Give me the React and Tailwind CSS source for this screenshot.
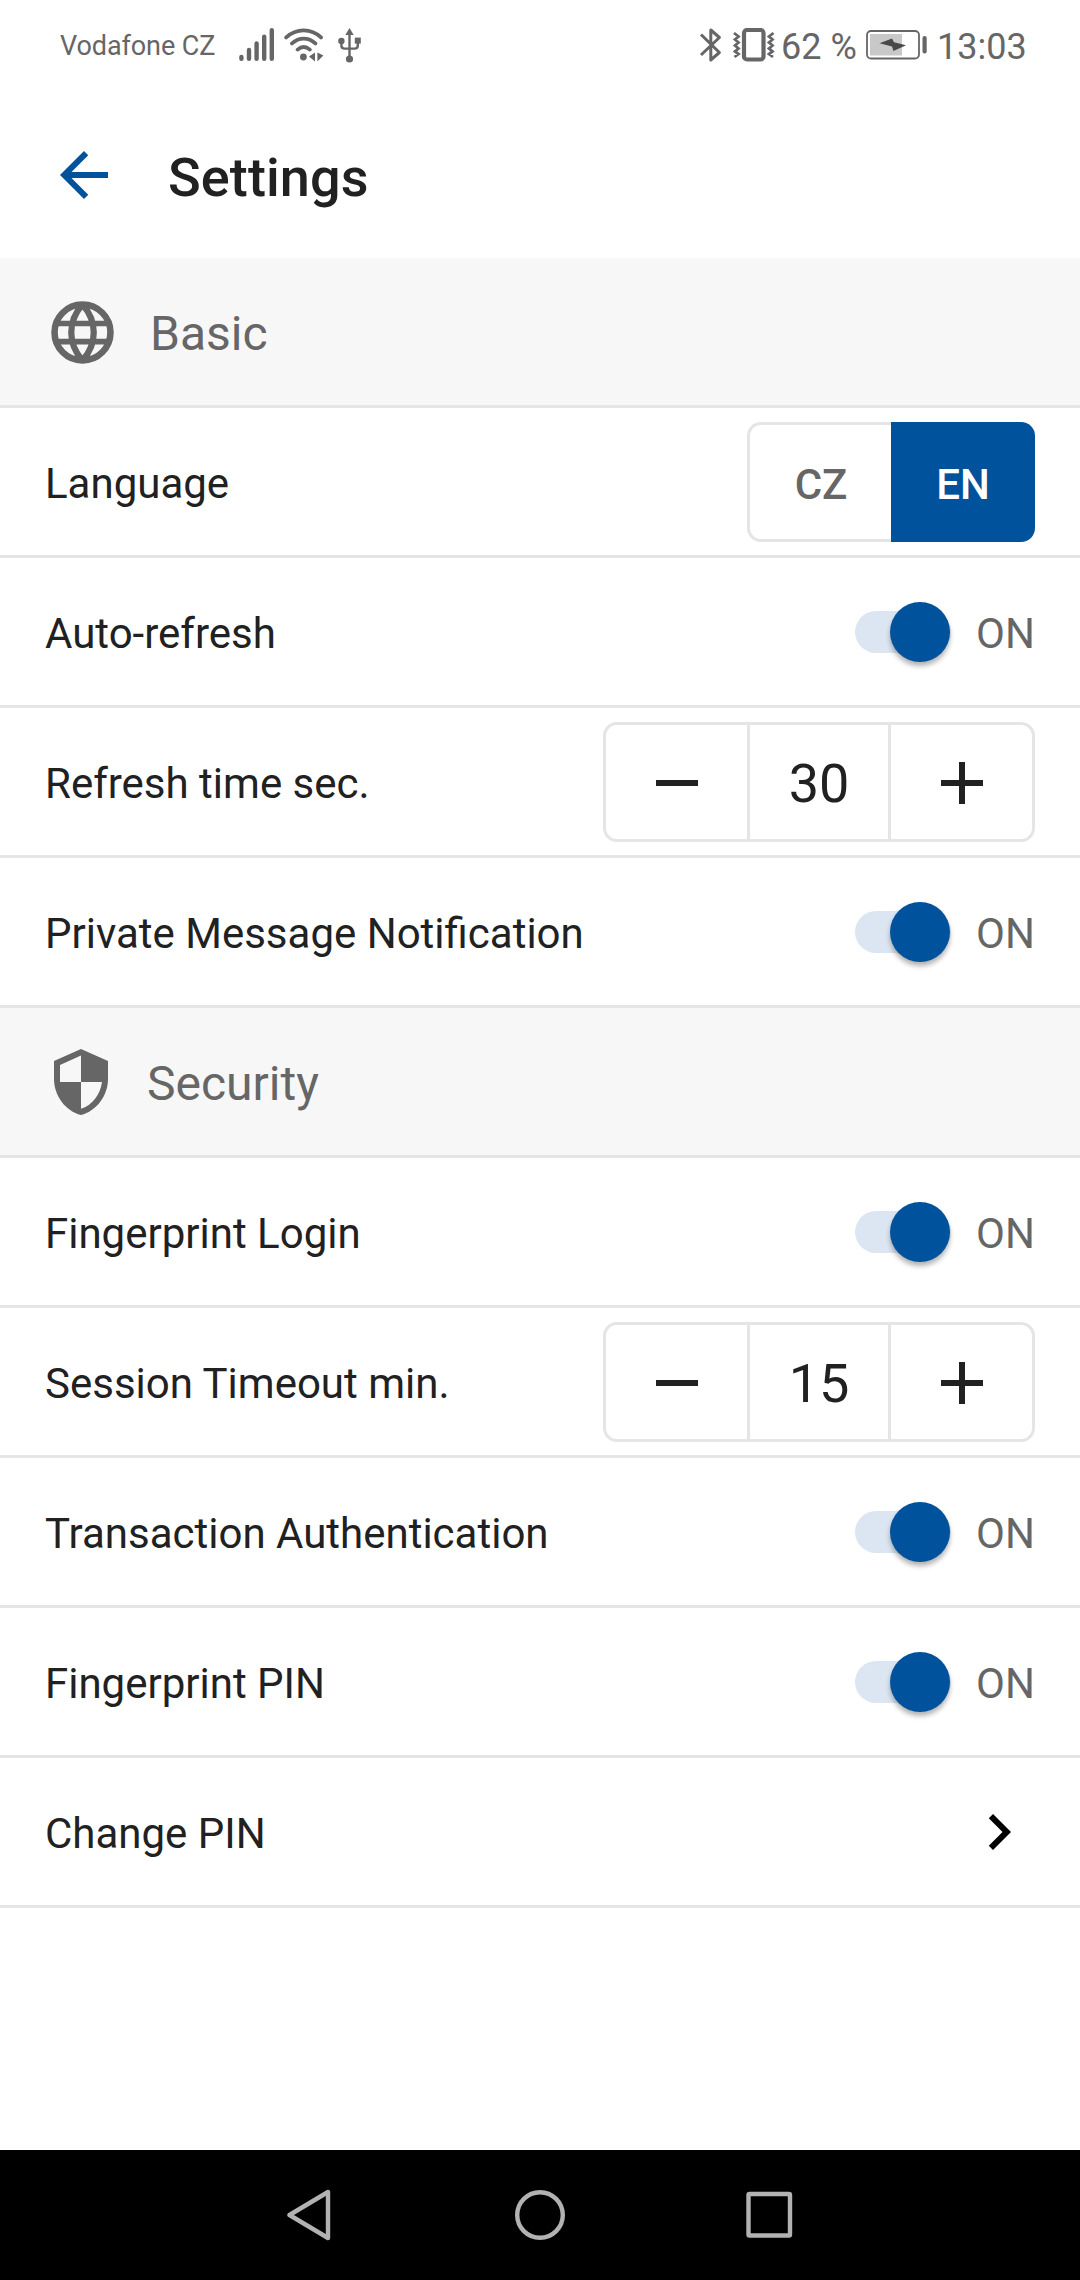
import React, { useState } from "react";

function SignalIcon() {
  return (
    <svg width="36" height="34" viewBox="0 0 36 34" stroke="#666" strokeWidth="4.4" strokeLinecap="round">
      <path d="M2.400 29v1.800M10 22v8.800M17.600 15.400v15.400M25.200 8.600v22.200M32.800 2.200v28.600" />
    </svg>
  );
}

function WifiIcon() {
  return (
    <svg width="40" height="34" viewBox="0 0 40 34" fill="none" stroke="#666" strokeWidth="3.8" strokeLinecap="round">
      <path d="M2.200 9.400C12.200 0 27.200 0 37 9.400M8 15.400c7-6.400 16.400-6.400 23.400 0M13.600 21.600c3.800-3.200 8.400-3.200 12.200 0" />
      <circle cx="19.4" cy="29" r="3.400" fill="#666" stroke="none" />
      <path d="M31 24.500v9l-6-5zM33.400 24.500v9l6-6z" fill="#666" stroke="none" />
    </svg>
  );
}

function UsbIcon() {
  return (
    <svg width="24" height="36" viewBox="0 0 24 36" fill="none" stroke="#666" strokeWidth="2.4">
      <path d="M11.500 6v26M3.400 13v5.400q0 3.200 3.200 3.200h10q3.200 0 3.200-3.200V13" />
      <path d="M11.500 1l4.200 7H7.300z" fill="#666" stroke="none" />
      <circle cx="3.400" cy="14" r="3.200" fill="#666" stroke="none" />
      <path d="M16.800 10.600h6v6h-6z" fill="#666" stroke="none" />
      <circle cx="11.500" cy="32" r="3.600" fill="#666" stroke="none" />
    </svg>
  );
}

function BluetoothIcon() {
  return (
    <svg width="24" height="36" viewBox="0 0 24 36" fill="none" stroke="#666" strokeWidth="3" strokeLinejoin="round">
      <path d="M2 7.500l18.400 18-8.600 7.500V3l8.600 7.500L2 28" />
    </svg>
  );
}

function VibrateIcon() {
  return (
    <svg width="44" height="34" viewBox="0 0 44 34" fill="none" stroke="#666">
      <rect x="12" y="2" width="19.500" height="29.500" rx="3" strokeWidth="4.200" />
      <path d="M2 5l4.500 3.500-3.500 3 3.500 3-3.500 3 3.500 3-3.500 3 3.500 2.500-4 3M41.500 5L37 8.500l3.500 3-3.500 3 3.500 3-3.500 3 3.500 3-3.500 2.500 4 3" strokeWidth="2.800" />
    </svg>
  );
}

function BatteryIcon() {
  return (
    <svg width="62" height="30" viewBox="0 0 62 30">
      <rect x="1" y="1" width="52" height="27.500" rx="4" fill="none" stroke="#666" strokeWidth="1.800" />
      <rect x="4" y="4" width="32" height="21.500" fill="#c8c8c8" />
      <path d="M13.500 13.200L26 8.500l2 3.800 12 3-12.500 5.700-1.500-4.500z" fill="#484848" />
      <rect x="56.500" y="6" width="4.200" height="17.500" rx="2" fill="#666" />
    </svg>
  );
}

function StatusBar() {
  return (
    <div className="flex h-[90px] items-center text-[#666]">
      <div className="ml-[60px] w-[179px] pt-[2px] whitespace-nowrap text-[27px] tracking-[-0.1px]">Vodafone CZ</div>
      <SignalIcon />
      <div className="ml-[9px]"><WifiIcon /></div>
      <div className="ml-[14px]"><UsbIcon /></div>
      <div className="ml-auto flex items-center">
        <BluetoothIcon />
        <div className="ml-[9px] w-[49px]"><VibrateIcon /></div>
        <div className="w-[85px] pt-[4px] whitespace-nowrap text-[36px]">62 %</div>
        <BatteryIcon />
        <div className="ml-[9px] w-[143px] pt-[4px] whitespace-nowrap text-[36px]">13:03</div>
      </div>
    </div>
  );
}

function Header() {
  return (
    <header className="flex h-[168px] items-center">
      <button className="ml-[48px] pt-[2px]" aria-label="Back">
        <svg width="72" height="72" viewBox="0 0 24 24" fill="#00529c">
          <path d="M20 11H7.830l5.590-5.590L12 4l-8 8 8 8 1.410-1.410L7.830 13H20v-2z" />
        </svg>
      </button>
      <h1 className="ml-[48px] pt-[7px] text-[54px] font-medium tracking-[0.1px] text-[#212121]">Settings</h1>
    </header>
  );
}

function GlobeIcon() {
  return (
    <svg className="mt-[2px]" width="75" height="75" viewBox="0 0 24 24" fill="none" stroke="#666">
      <circle cx="12" cy="12" r="8.950" strokeWidth="2.100" />
      <path d="M3.500 9.100h17M3.500 14.900h17" strokeWidth="1.800" />
      <path d="M12 3C7.200 8.500 7.200 15.500 12 21M12 3c4.800 5.500 4.800 12.500 0 18" strokeWidth="2" />
    </svg>
  );
}

function ShieldIcon() {
  return (
    <svg width="72" height="72" viewBox="0 0 24 24" fill="#666">
      <path d="M12 1L3 5v6c0 5.550 3.840 10.740 9 12 5.160-1.260 9-6.450 9-12V5l-9-4zm0 10.990h7c-.53 4.120-3.280 7.790-7 8.940V12H5V6.300l7-3.110v8.800z" />
    </svg>
  );
}

function Section({ icon, title }) {
  return (
    <div className="flex h-[150px] items-center gap-[30px] border-b-[3px] border-[#e5e5e5] bg-[#f7f7f7] pl-[45px]">
      {icon}
      <h2 className="pt-[4px] text-[48px] text-[#666]">{title}</h2>
    </div>
  );
}

function Row({ label, children }) {
  return (
    <div className="flex h-[150px] items-center justify-between border-b-[3px] border-[#e5e5e5] px-[45px]">
      <span className="pt-[5px] text-[42px] text-[#212121]">{label}</span>
      {children}
    </div>
  );
}

function Toggle() {
  const [on, setOn] = useState(true);
  return (
    <button onClick={() => setOn(!on)} className="flex items-center" role="switch" aria-checked={on}>
      <span className={"flex h-[42px] w-[96px] items-center rounded-full bg-[#dce6f2] " + (on ? "justify-end pr-px" : "justify-start")}>
        <span className="size-[60px] rounded-full bg-[#00529c] shadow-[0_4px_5px_rgba(0,0,0,0.3)]" />
      </span>
      <span className="ml-[25px] w-[59px] pt-[5px] text-left text-[42px] text-[#666]">{on ? "ON" : "OFF"}</span>
    </button>
  );
}

function Stepper({ initial }) {
  const [value, setValue] = useState(initial);
  return (
    <div className="flex h-[120px] w-[432px] rounded-[14px] border-[3px] border-[#e5e5e5] text-[#212121]">
      <button className="flex w-[141px] items-center justify-center pt-[2px]" aria-label="Decrease" onClick={() => setValue(value - 1)}>
        <svg width="72" height="72" viewBox="0 0 24 24" fill="currentColor"><path d="M19 13H5v-2h14z" /></svg>
      </button>
      <div className="flex w-[144px] items-center justify-center border-x-[3px] border-[#e5e5e5] pt-[5px] text-[54px]">{value}</div>
      <button className="flex w-[141px] items-center justify-center pt-[2px]" aria-label="Increase" onClick={() => setValue(value + 1)}>
        <svg width="72" height="72" viewBox="0 0 24 24" fill="currentColor"><path d="M19 13h-6v6h-2v-6H5v-2h6V5h2v6h6z" /></svg>
      </button>
    </div>
  );
}

function LanguagePicker() {
  return (
    <div className="flex h-[120px] w-[288px] text-[42px] font-medium">
      <button className="flex w-[144px] items-center justify-center rounded-l-[14px] border-[3px] border-r-0 border-[#e5e5e5] pt-[6px] pl-[1px] text-[#666]">CZ</button>
      <button className="flex w-[144px] items-center justify-center rounded-r-[14px] bg-[#00529c] pt-[6px] text-white">EN</button>
    </div>
  );
}

function NavBar() {
  return (
    <nav className="mt-auto flex h-[130px] items-center justify-center bg-black">
      <svg width="506" height="52" viewBox="0 0 506 52" fill="none" stroke="#b2b2b2" strokeWidth="4.400" strokeLinejoin="round">
        <path d="M2.500 26L41 3v46z" />
        <circle cx="253" cy="26" r="22.800" />
        <rect x="461.500" y="5" width="41.500" height="41.500" rx="1" />
      </svg>
    </nav>
  );
}

export default function App() {
  return (
    <div className="flex h-[2280px] w-[1080px] flex-col overflow-hidden bg-white font-['Roboto',sans-serif] leading-none">
      <StatusBar />
      <Header />
      <Section icon={<GlobeIcon />} title="Basic" />
      <Row label="Language"><LanguagePicker /></Row>
      <Row label="Auto-refresh"><Toggle /></Row>
      <Row label="Refresh time sec."><Stepper initial={30} /></Row>
      <Row label="Private Message Notification"><Toggle /></Row>
      <Section icon={<ShieldIcon />} title="Security" />
      <Row label="Fingerprint Login"><Toggle /></Row>
      <Row label="Session Timeout min."><Stepper initial={15} /></Row>
      <Row label="Transaction Authentication"><Toggle /></Row>
      <Row label="Fingerprint PIN"><Toggle /></Row>
      <Row label="Change PIN">
        <svg width="72" height="72" viewBox="0 0 24 24" fill="#000">
          <path d="M10 6L8.590 7.410 13.170 12l-4.580 4.590L10 18l6-6z" />
        </svg>
      </Row>
      <NavBar />
    </div>
  );
}
